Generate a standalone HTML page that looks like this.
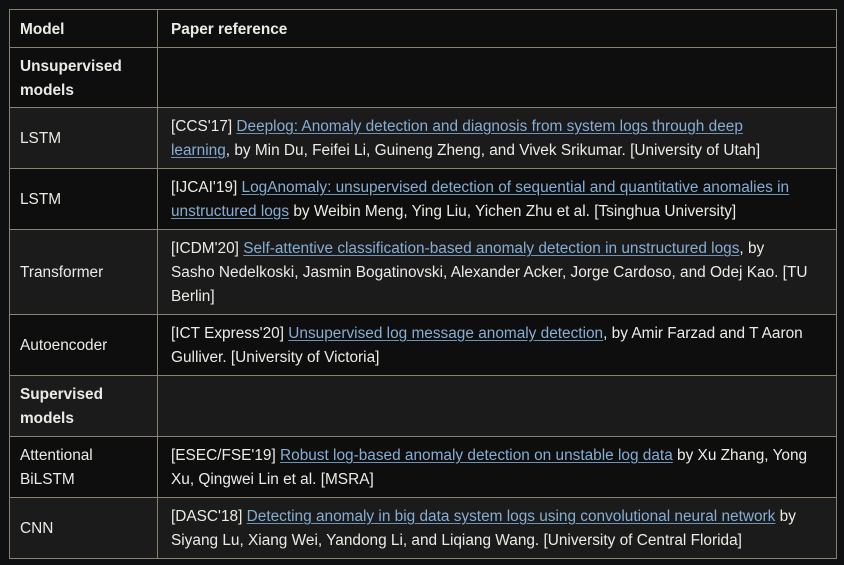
<!DOCTYPE html>
<html><head><meta charset="utf-8"><style>
html,body{margin:0;padding:0;background:#0f1011;width:844px;height:565px;overflow:hidden}
table{position:absolute;left:9px;top:9px;width:827px;table-layout:fixed;border-collapse:collapse;font-family:"Liberation Sans",sans-serif;font-size:15.4px;color:#ebebe6;line-height:24px}
td,th{border:1px solid #8a8172;padding:2px 0 0 10px;vertical-align:middle;text-align:left;white-space:nowrap;overflow:hidden}
td:last-child,th:last-child{padding-left:13px}
tr{background:#0e0e0e}
tr.l{background:#1b1b1b}
th,b{font-weight:bold}
a{color:#86aed4;text-decoration:underline;text-decoration-color:#6f93b5;text-underline-offset:2px}
</style></head><body>
<table>
<col style="width:148px"><col style="width:679px">
<tr style="height:38px"><th>Model</th><th>Paper reference</th></tr>
<tr style="height:60px"><td><b>Unsupervised<br>models</b></td><td></td></tr>
<tr class="l" style="height:61px"><td>LSTM</td><td>[CCS'17] <a>Deeplog: Anomaly detection and diagnosis from system logs through deep<br>learning</a>, by Min Du, Feifei Li, Guineng Zheng, and Vivek Srikumar. [University of Utah]</td></tr>
<tr style="height:61px"><td>LSTM</td><td>[IJCAI'19] <a>LogAnomaly: unsupervised detection of sequential and quantitative anomalies in<br>unstructured logs</a> by Weibin Meng, Ying Liu, Yichen Zhu et al. [Tsinghua University]</td></tr>
<tr class="l" style="height:85px"><td>Transformer</td><td>[ICDM'20] <a>Self-attentive classification-based anomaly detection in unstructured logs</a>, by<br>Sasho Nedelkoski, Jasmin Bogatinovski, Alexander Acker, Jorge Cardoso, and Odej Kao. [TU<br>Berlin]</td></tr>
<tr style="height:61px"><td>Autoencoder</td><td>[ICT Express'20] <a>Unsupervised log message anomaly detection</a>, by Amir Farzad and T Aaron<br>Gulliver. [University of Victoria]</td></tr>
<tr class="l" style="height:61px"><td><b>Supervised<br>models</b></td><td></td></tr>
<tr style="height:61px"><td>Attentional<br>BiLSTM</td><td>[ESEC/FSE'19] <a>Robust log-based anomaly detection on unstable log data</a> by Xu Zhang, Yong<br>Xu, Qingwei Lin et al. [MSRA]</td></tr>
<tr class="l" style="height:61px"><td>CNN</td><td>[DASC'18] <a>Detecting anomaly in big data system logs using convolutional neural network</a> by<br>Siyang Lu, Xiang Wei, Yandong Li, and Liqiang Wang. [University of Central Florida]</td></tr>
</table>
</body></html>
